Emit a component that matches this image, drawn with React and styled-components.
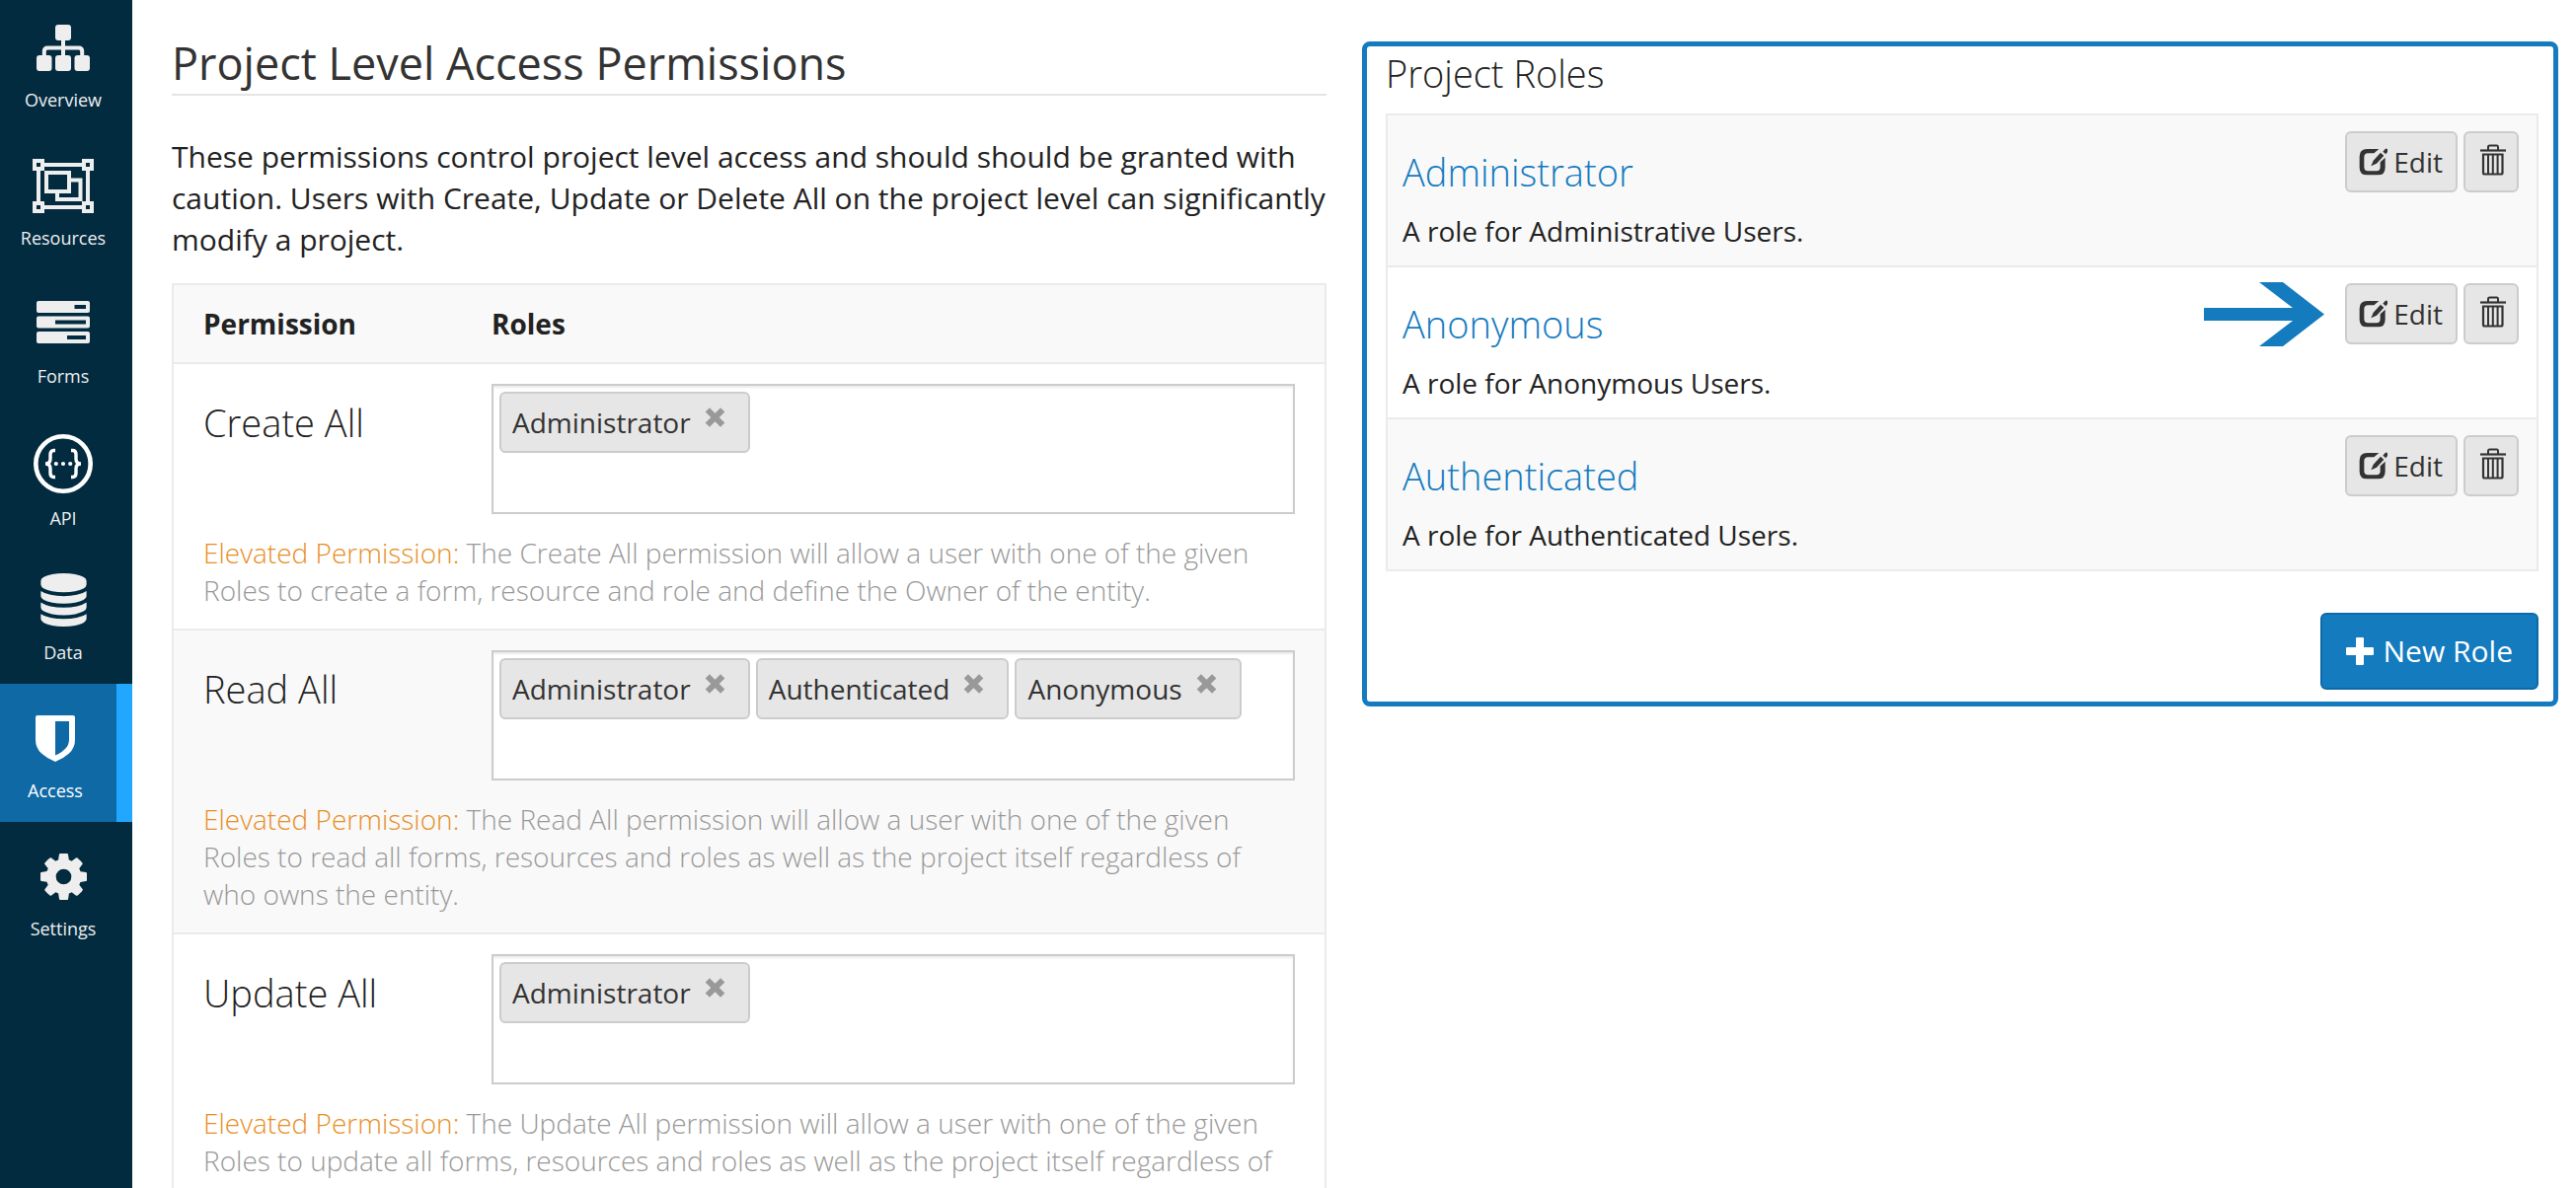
import React from "react";
import styled, { createGlobalStyle, css } from "styled-components";

const GlobalStyle = createGlobalStyle`
  *, *::before, *::after { box-sizing: border-box; }
  body {
    margin: 0;
    background: #fff;
    color: #222;
    font-family: "Open Sans", "Noto Sans", sans-serif;
    font-size: 28px;
    line-height: 38px;
  }
  h1, h2, h3, p, ul { margin: 0; padding: 0; font-weight: inherit; }
  button, input { font: inherit; color: inherit; }
`;

const Shell = styled.div`
  display: flex;
  height: 100vh;
  overflow: hidden;
`;

const Sidebar = styled.nav`
  flex: none;
  width: 134px;
  background: #022b40;
`;

const NavItem = styled.a`
  display: flex;
  flex-direction: column;
  align-items: center;
  gap: 10px;
  height: 140px;
  padding: 24px 6px 0 0;
  color: #eee;
  font-size: 18px;
  line-height: 24px;
  font-weight: 500;
  text-decoration: none;

  &:first-child {
    height: 133px;
    padding-top: 17px;
  }

  ${(p) =>
    p.$active &&
    css`
      background: #0e69a5;
      border-right: 16px solid #22a7ff;
      color: #fff;
    `}
`;

const IconSlot = styled.span`
  display: flex;
  align-items: center;
  justify-content: center;
  height: ${(p) => (p.$tall ? 66 : 62)}px;
`;

const Main = styled.main`
  flex: 1;
  min-width: 0;
  display: grid;
  grid-template-columns: minmax(0, 1170fr) minmax(0, 1212fr);
  align-items: start;
  gap: 36px;
  padding: 0 18px 0 40px;
  overflow: hidden;
`;

const Permissions = styled.section`
  padding-top: 33px;
`;

const PageTitle = styled.h1`
  font-size: 45px;
  line-height: 62px;
  color: #333;
  border-bottom: 2px solid #e5e5e5;
`;

const Intro = styled.p`
  margin: 41px 0 23px;
  font-size: 30px;
  line-height: 42px;
`;

const PermTable = styled.table`
  width: 100%;
  table-layout: fixed;
  border-collapse: separate;
  border-spacing: 0;
  border: 2px solid #ebebeb;

  th, td {
    padding: 20px 30px 0 0;
    text-align: left;
    vertical-align: top;
  }
  th:first-child, td:first-child { padding-left: 30px; }
`;

const NameCol = styled.col`
  width: 322px;
`;

const HeadRow = styled.tr`
  background: #f9f9f9;

  && th {
    padding-bottom: 20px;
    font-weight: 700;
  }
`;

const PermGroup = styled.tbody`
  background: ${(p) => (p.$shaded ? "#f9f9f9" : "#fff")};

  tr:first-child > * { border-top: 2px solid #ebebeb; }
`;

const PermName = styled.span`
  display: block;
  padding-top: 13px;
  font-size: 38px;
  line-height: 52px;
  font-weight: 300;
`;

const HelpCell = styled.td`
  && { padding-bottom: 20px; }
  color: #999;
  font-weight: 300;
`;

const Warning = styled.span`
  color: #e88f1f;
`;

const RoleBox = styled.div`
  display: flex;
  flex-wrap: wrap;
  gap: 6px;
  padding: 6px;
  border: 2px solid #ccc;
  background: #fff;
  box-shadow: inset 0 2px 2px rgba(0, 0, 0, 0.075);
`;

const RoleInput = styled.input`
  flex: 1 0 100%;
  height: 48px;
  padding: 0 12px;
  border: 0;
  outline: 0;
  background: transparent;
`;

const Tag = styled.span`
  display: flex;
  gap: 14px;
  height: 62px;
  padding: 10px 23px 0 11px;
  border: 2px solid #ccc;
  border-radius: 6px;
  background: #e6e6e6;
  color: #333;
`;

const RemoveButton = styled.button`
  display: flex;
  align-items: center;
  height: 28px;
  padding: 0;
  border: 0;
  background: none;
  color: #999;
`;

const RolesPanel = styled.section`
  margin-top: 42px;
  padding: 1px 15px 12px 19px;
  border: 5px solid #147bbf;
  border-radius: 8px;
`;

const PanelTitle = styled.h2`
  padding-bottom: 15px;
  font-size: 38px;
  line-height: 52px;
  font-weight: 300;
`;

const RoleList = styled.ul`
  list-style: none;
  border: 2px solid #ebebeb;
`;

const RoleRow = styled.li`
  display: flex;
  justify-content: space-between;
  align-items: flex-start;
  padding: 16px 18px 16px 15px;

  &:nth-child(odd) { background: #f9f9f9; }
  & + & { border-top: 2px solid #ebebeb; }
`;

const RoleText = styled.div`
  display: flex;
  flex-direction: column;
  gap: 15px;
  padding-top: 15px;
`;

const RoleLink = styled.a`
  color: #147bbf;
  font-size: 38px;
  line-height: 52px;
  font-weight: 300;
  text-decoration: none;
`;

const Actions = styled.div`
  position: relative;
  display: flex;
  gap: 6px;
`;

const SmallButton = styled.button`
  display: flex;
  align-items: center;
  gap: 6px;
  height: 62px;
  padding: ${(p) => (p.$iconOnly ? "0 11px 0 15px" : "0 13px 0 12px")};
  border: 2px solid #ccc;
  border-radius: 6px;
  background: #e6e6e6;
  color: #333;
`;

const Pointer = styled.svg`
  position: absolute;
  right: calc(100% + 21px);
  top: -1px;
`;

const PanelFooter = styled.div`
  display: flex;
  justify-content: flex-end;
  padding-top: 42px;
`;

const PrimaryButton = styled.button`
  display: flex;
  align-items: center;
  gap: 10px;
  height: 78px;
  padding: 0 24px;
  border: 2px solid #0d6aa8;
  border-radius: 6px;
  background: #147bbf;
  color: #fff;
  font-size: 30px;
  line-height: 42px;
`;

const SitemapIcon = () => (
  <svg width="54" height="47" viewBox="0 0 54 47" fill="currentColor" aria-hidden="true">
    <rect x="19" y="0" width="16" height="16" rx="3" />
    <rect x="0" y="31" width="15.500" height="16" rx="3" />
    <rect x="19" y="31" width="16" height="16" rx="3" />
    <rect x="38.500" y="31" width="15.500" height="16" rx="3" />
    <path d="M27 14v20M7.800 33v-6q0-3.500 3.500-3.500h31.400q3.500 0 3.500 3.500v6" fill="none" stroke="currentColor" strokeWidth="4" />
  </svg>
);

const GroupIcon = () => (
  <svg width="62" height="55" viewBox="0 0 62 55" fill="none" stroke="currentColor" strokeWidth="4" aria-hidden="true">
    <path d="M12 6h38M12 49h38M6 12v31M56 12v31" />
    <path d="M2 2h8v8H2zM52 2h8v8h-8zM2 45h8v8H2zM52 45h8v8h-8z" />
    <path d="M14 14h23v19H14zM39 21.500h9.500V41H25v-7" />
  </svg>
);

const FormsIcon = () => (
  <svg width="54" height="47" viewBox="0 0 54 47" fill="currentColor" fillRule="evenodd" aria-hidden="true">
    <path d="M2 0h50q2 0 2 2v8q0 2-2 2H2q-2 0-2-2V2q0-2 2-2zM38.500 4v4H50V4z" />
    <path d="M2 15.500h50q2 0 2 2v8q0 2-2 2H2q-2 0-2-2v-8q0-2 2-2zM19 19.500v4h31v-4z" />
    <path d="M2 31h50q2 0 2 2v8q0 2-2 2H2q-2 0-2-2v-8q0-2 2-2zM31 35v4h19v-4z" />
  </svg>
);

const ApiIcon = () => (
  <svg width="60" height="60" viewBox="0 0 60 60" fill="none" stroke="#fff" aria-hidden="true">
    <circle cx="30" cy="30" r="27.700" strokeWidth="4.600" />
    <path d="M22 16.500h-1.500q-3.500 0-3.500 4v4.500q0 5-5 5 5 0 5 5v4.500q0 4 3.500 4H22M38 16.500h1.500q3.500 0 3.500 4v4.500q0 5 5 5-5 0-5 5v4.500q0 4-3.500 4H38" strokeWidth="3.400" />
    <g fill="#fff" stroke="none">
      <circle cx="22.800" cy="30" r="2.100" />
      <circle cx="30" cy="30" r="2.100" />
      <circle cx="37.200" cy="30" r="2.100" />
    </g>
  </svg>
);

const DatabaseIcon = () => (
  <svg width="47" height="54" viewBox="0 0 1536 1792" fill="currentColor" aria-hidden="true">
    <path d="M768 768q237 0 443-43t325-127v170q0 69-103 128t-280 93.500-385 34.500-385-34.500-280-93.500-103-128v-170q119 84 325 127t443 43zm0 768q237 0 443-43t325-127v170q0 69-103 128t-280 93.500-385 34.500-385-34.500-280-93.500-103-128v-170q119 84 325 127t443 43zm0-384q237 0 443-43t325-127v170q0 69-103 128t-280 93.500-385 34.500-385-34.500-280-93.500-103-128v-170q119 84 325 127t443 43zm0-1152q208 0 385 34.500t280 93.500 103 128v128q0 69-103 128t-280 93.500-385 34.500-385-34.500-280-93.500-103-128v-128q0-69 103-128t280-93.500 385-34.500z" />
  </svg>
);

const ShieldIcon = () => (
  <svg width="40" height="47" viewBox="0 0 40 47" fill="currentColor" fillRule="evenodd" aria-hidden="true">
    <path d="M2 0h36q2 0 2 2v22.500q0 8.500-6 14Q28 44 20 47 12 44 6 38.500q-6-5.500-6-14V2q0-2 2-2zM20 6v34.500q6-2.500 10-6.500t4-9.500V6z" />
  </svg>
);

const CogIcon = () => (
  <svg width="47" height="47" viewBox="0 128 1536 1536" fill="currentColor" aria-hidden="true">
    <path d="M1024 896q0-106-75-181t-181-75-181 75-75 181 75 181 181 75 181-75 75-181zm512-109v222q0 12-8 23t-20 13l-185 28q-19 54-39 91 35 50 107 138 10 12 10 25t-9 23q-27 37-99 108t-94 71q-12 0-26-9l-138-108q-44 23-91 38-16 136-29 186-7 28-36 28h-222q-14 0-24.500-8.500t-11.500-21.500l-28-184q-49-16-90-37l-141 107q-10 9-25 9-14 0-25-11-126-114-165-168-7-10-7-23 0-12 8-23 15-21 51-66.500t54-70.500q-27-50-41-99l-183-27q-13-2-21-12.500t-8-23.500v-222q0-12 8-23t19-13l186-28q14-46 39-92-40-57-107-138-10-12-10-24 0-10 9-23 26-36 98.500-107.500t94.500-71.500q13 0 26 10l138 107q44-23 91-38 16-136 29-186 7-28 36-28h222q14 0 24.500 8.500t11.500 21.500l28 184q49 16 90 37l142-107q9-9 24-9 13 0 25 10 129 119 165 170 7 8 7 22 0 12-8 23-15 21-51 66.500t-54 70.500q26 50 41 98l183 28q13 2 21 12.500t8 23.500z" />
  </svg>
);

const EditIcon = () => (
  <svg width="29" height="28" viewBox="0 0 87 84" fill="currentColor" aria-hidden="true">
    <path d="M61 3H25Q2 3 2 26v33q0 23 23 23h33q22 0 22-23V29L65 43v15q0 12-11 12H28q-12 0-12-12V28q0-12 12-12h18z" />
    <path d="M37 55l7-17 22-24 10 9-22 24zM73 11l7-8q3-3 6 0l2 2q3 3 0 6l-6 8z" />
  </svg>
);

const TrashIcon = () => (
  <svg width="26" height="36" viewBox="0 0 26 36" fill="none" stroke="currentColor" aria-hidden="true">
    <path d="M0 6.500h26" strokeWidth="2.200" />
    <path d="M8 6V3q0-1.500 1.500-1.500h7.500Q18 1.500 18 3v3" strokeWidth="2" />
    <path d="M3 10.500h19.500v18.500q0 1.500-1.500 1.500H4.500Q3 30.500 3 29z" strokeWidth="2.200" />
    <path d="M8 11v19M12.800 11v19M17.600 11v19" strokeWidth="2" />
  </svg>
);

const PlusIcon = () => (
  <svg width="28" height="28" viewBox="0 0 28 28" fill="currentColor" aria-hidden="true">
    <path d="M11 0h6q1 0 1 1v9h9q1 0 1 1v6q0 1-1 1h-9v9q0 1-1 1h-6q-1 0-1-1v-9H1q-1 0-1-1v-6q0-1 1-1h9V1q0-1 1-1z" />
  </svg>
);

const CrossIcon = () => (
  <svg width="21" height="20" viewBox="0 0 21 20" fill="none" stroke="currentColor" strokeWidth="6" aria-hidden="true">
    <path d="M2.800 2.300l15.400 15.400M18.200 2.300L2.800 17.700" />
  </svg>
);

const navItems = [
  { label: "Overview", Icon: SitemapIcon },
  { label: "Resources", Icon: GroupIcon },
  { label: "Forms", Icon: FormsIcon },
  { label: "API", Icon: ApiIcon, tall: true },
  { label: "Data", Icon: DatabaseIcon },
  { label: "Access", Icon: ShieldIcon, active: true },
  { label: "Settings", Icon: CogIcon },
];

const permissions = [
  {
    name: "Create All",
    roles: ["Administrator"],
    help: "The Create All permission will allow a user with one of the given Roles to create a form, resource and role and define the Owner of the entity.",
  },
  {
    name: "Read All",
    roles: ["Administrator", "Authenticated", "Anonymous"],
    help: "The Read All permission will allow a user with one of the given Roles to read all forms, resources and roles as well as the project itself regardless of who owns the entity.",
  },
  {
    name: "Update All",
    roles: ["Administrator"],
    help: "The Update All permission will allow a user with one of the given Roles to update all forms, resources and roles as well as the project itself regardless of who owns the entity.",
  },
];

const roles = [
  { name: "Administrator", text: "A role for Administrative Users." },
  { name: "Anonymous", text: "A role for Anonymous Users.", pointed: true },
  { name: "Authenticated", text: "A role for Authenticated Users." },
];

function Permission({ name, roles: assigned, help, shaded }) {
  return (
    <PermGroup $shaded={shaded}>
      <tr>
        <th scope="row">
          <PermName>{name}</PermName>
        </th>
        <td>
          <RoleBox>
            {assigned.map((role) => (
              <Tag key={role}>
                {role}
                <RemoveButton type="button" aria-label={`Remove ${role}`}>
                  <CrossIcon />
                </RemoveButton>
              </Tag>
            ))}
            <RoleInput type="text" aria-label={`${name} roles`} />
          </RoleBox>
        </td>
      </tr>
      <tr>
        <HelpCell colSpan={2}>
          <Warning>Elevated Permission:</Warning> {help}
        </HelpCell>
      </tr>
    </PermGroup>
  );
}

export default function App() {
  return (
    <>
      <GlobalStyle />
      <Shell>
        <Sidebar aria-label="Project">
          {navItems.map(({ label, Icon, tall, active }) => (
            <NavItem key={label} href="#" $active={active} aria-current={active ? "page" : undefined}>
              <IconSlot $tall={tall}>
                <Icon />
              </IconSlot>
              {label}
            </NavItem>
          ))}
        </Sidebar>
        <Main>
          <Permissions>
            <PageTitle>Project Level Access Permissions</PageTitle>
            <Intro>
              These permissions control project level access and should should be granted with caution. Users with
              Create, Update or Delete All on the project level can significantly modify a project.
            </Intro>
            <PermTable>
              <colgroup>
                <NameCol />
                <col />
              </colgroup>
              <thead>
                <HeadRow>
                  <th scope="col">Permission</th>
                  <th scope="col">Roles</th>
                </HeadRow>
              </thead>
              {permissions.map((permission, index) => (
                <Permission key={permission.name} {...permission} shaded={index % 2 === 1} />
              ))}
            </PermTable>
          </Permissions>
          <RolesPanel>
            <PanelTitle>Project Roles</PanelTitle>
            <RoleList>
              {roles.map(({ name, text, pointed }) => (
                <RoleRow key={name}>
                  <RoleText>
                    <RoleLink href="#">{name}</RoleLink>
                    <p>{text}</p>
                  </RoleText>
                  <Actions>
                    {pointed && (
                      <Pointer width="122" height="65" viewBox="0 0 122 65" fill="#147bbf" aria-hidden="true">
                        <path d="M0 26h90L56 0h24l42 32.500L80 65H56l34-26H0z" />
                      </Pointer>
                    )}
                    <SmallButton type="button">
                      <EditIcon />
                      Edit
                    </SmallButton>
                    <SmallButton type="button" $iconOnly aria-label={`Delete ${name}`}>
                      <TrashIcon />
                    </SmallButton>
                  </Actions>
                </RoleRow>
              ))}
            </RoleList>
            <PanelFooter>
              <PrimaryButton type="button">
                <PlusIcon />
                New Role
              </PrimaryButton>
            </PanelFooter>
          </RolesPanel>
        </Main>
      </Shell>
    </>
  );
}
